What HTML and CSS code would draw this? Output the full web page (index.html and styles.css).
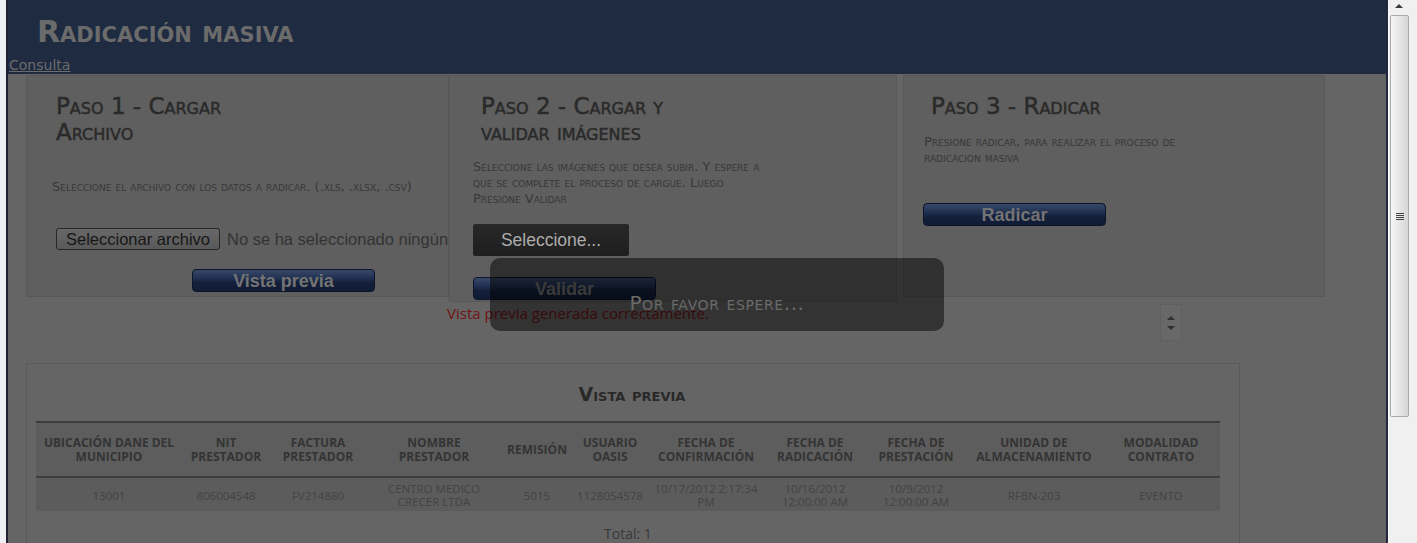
FILE: index.html
```html
<!DOCTYPE html>
<html lang="es">
<head>
<meta charset="utf-8">
<title>Radicación masiva</title>
<link rel="stylesheet" href="styles.css">
</head>
<body>
<div class="edge"></div>
<div class="frame">
  <header class="topbar">
    <h1 class="title">Radicación masiva</h1>
    <a class="nav-link" href="#">Consulta</a>
  </header>

  <section class="steps">
    <div class="step step-1">
      <h2 class="step-title">Paso 1 - Cargar Archivo</h2>
      <p class="step-desc">Seleccione el archivo con los datos a radicar. (.xls, .xlsx, .csv)</p>
      <div class="file-input">
        <span class="file-btn">Seleccionar archivo</span>
        <span class="file-name">No se ha seleccionado ningún archivo</span>
      </div>
      <button class="btn-navy btn-preview">Vista previa</button>
    </div>

    <div class="step step-2">
      <h2 class="step-title">Paso 2 - Cargar y validar imágenes</h2>
      <p class="step-desc">Seleccione las imágenes que desea subir. Y espere a<br>que se complete el proceso de cargue. Luego<br>Presione Validar</p>
      <button class="upload-btn">Seleccione...</button>
      <button class="btn-navy btn-validate">Validar</button>
    </div>

    <div class="step step-3">
      <h2 class="step-title">Paso 3 - Radicar</h2>
      <p class="step-desc">Presione radicar, para realizar el proceso de<br>radicacion masiva</p>
      <button class="btn-navy btn-submit">Radicar</button>
    </div>
  </section>

  <div class="status-row">
    <span class="status-msg">Vista previa generada correctamente.</span>
    <div class="spinner">
      <span class="spin-up"></span>
      <span class="spin-down"></span>
    </div>
  </div>

  <section class="preview">
    <h2 class="preview-title">Vista previa</h2>
    <table class="grid">
      <colgroup>
        <col class="c1"><col class="c2"><col class="c3"><col class="c4"><col class="c5"><col class="c6"><col class="c7"><col class="c8"><col class="c9"><col class="c10"><col class="c11">
      </colgroup>
      <thead>
        <tr>
          <th>Ubicación DANE del municipio</th>
          <th>NIT prestador</th>
          <th>Factura prestador</th>
          <th>Nombre<br>prestador</th>
          <th>Remisión</th>
          <th>Usuario Oasis</th>
          <th>Fecha de confirmación</th>
          <th>Fecha de radicación</th>
          <th>Fecha de prestación</th>
          <th>Unidad de almacenamiento</th>
          <th>Modalidad contrato</th>
        </tr>
      </thead>
      <tbody>
        <tr>
          <td>13001</td>
          <td>806004548</td>
          <td>FV214880</td>
          <td>CENTRO MEDICO CRECER LTDA</td>
          <td>5015</td>
          <td>1128054578</td>
          <td>10/17/2012 2:17:34 PM</td>
          <td>10/16/2012 12:00:00 AM</td>
          <td>10/9/2012 12:00:00 AM</td>
          <td>RFBN-203</td>
          <td>EVENTO</td>
        </tr>
      </tbody>
    </table>
    <p class="total">Total: 1</p>
  </section>

  <div class="modal">Por favor espere...</div>
</div>
<div class="scrollbar">
  <div class="sb-up"><span class="sb-arrow"></span></div>
  <div class="sb-thumb"><span class="sb-grip"></span></div>
</div>
</body>
</html>
```

FILE: styles.css
```css
/* The page is shown dimmed behind a "please wait" dialog
   (black overlay at 60%): the colours below are the dimmed ones. */

html, body {
  margin: 0;
  padding: 0;
}

body {
  width: 1417px;
  height: 543px;
  overflow: hidden;
  display: flex;
  background: #eef0f3;
  font-family: "DejaVu Sans", sans-serif;
}

.edge {
  width: 6px;
  flex: none;
  background: #eef0f3;
}

.frame {
  position: relative;
  flex: none;
  width: 1382px;
  box-sizing: border-box;
  border-left: 2px solid #1e2232;
  border-right: 2px solid #22283a;
  background: #656565;
  overflow: hidden;
}

/* header */
.topbar {
  height: 74px;
  box-sizing: border-box;
  background: #1f2b40;
  padding-top: 15px;
}

.title {
  margin: 0 0 0 29px;
  font-size: 30px;
  line-height: 34px;
  font-weight: bold;
  font-variant: small-caps;
  color: #6b6b6b;
}

.nav-link {
  display: block;
  width: max-content;
  margin: 8px 0 0 1px;
  font-size: 14px;
  line-height: 16px;
  color: #6c6c6c;
  text-decoration: underline;
}

/* steps */
.steps {
  display: flex;
  align-items: flex-start;
  margin-top: 1px;
  padding-left: 18px;
}

.step {
  box-sizing: border-box;
  min-height: 222px;
  background: #5f5f5f;
  border: 1px solid #585858;
  padding-top: 17px;
  padding-bottom: 1px;
}

.step-1 {
  width: 423px;
  padding-left: 25px;
}

.step-2 {
  width: 448px;
  padding-left: 23px;
}

.step-3 {
  width: 422px;
  margin-left: 6px;
  padding-left: 20px;
}

.step-title {
  margin: 0;
  width: 215px;
  font-size: 23px;
  line-height: 26px;
  font-weight: normal;
  font-variant: small-caps;
  color: #2a2a2a;
  -webkit-text-stroke: 0.5px #2a2a2a;
}

.step-1 .step-title { padding-left: 4px; }
.step-2 .step-title { padding-left: 8px; }
.step-3 .step-title { padding-left: 7px; }

.step-desc {
  margin: 0;
  font-size: 13px;
  line-height: 16px;
  font-variant: small-caps;
  color: #383838;
  white-space: nowrap;
}

.step-1 .step-desc { margin-top: 34px; }
.step-2 .step-desc { margin-top: 14px; }
.step-3 .step-desc { margin-top: 15px; }

.file-input {
  display: flex;
  align-items: center;
  gap: 7px;
  margin: 33px 0 0 4px;
  height: 22px;
  white-space: nowrap;
  font-family: "Liberation Sans", Arial, sans-serif;
  font-size: 16.5px;
}

.file-btn {
  box-sizing: border-box;
  height: 22px;
  line-height: 20px;
  padding: 0 9px;
  border: 1px solid #272727;
  border-radius: 3px;
  background: linear-gradient(#686868, #595959);
  color: #171717;
}

.file-name {
  color: #333333;
}

.btn-navy {
  display: block;
  box-sizing: border-box;
  width: 183px;
  height: 23px;
  padding: 0;
  border: 1px solid #0c1429;
  border-radius: 4px;
  background: linear-gradient(#394867 0%, #203051 40%, #141f3a 60%, #101c35 100%);
  color: #737373;
  font-family: "Liberation Sans", Arial, sans-serif;
  font-size: 18px;
  font-weight: bold;
  line-height: 20px;
  text-align: center;
}

.btn-preview {
  margin: 19px 0 0 140px;
}

/* upload widget drawn above the dimming layer */
.upload-btn {
  display: block;
  width: 156px;
  height: 32px;
  margin-top: 17px;
  padding: 0;
  border: none;
  border-radius: 2px;
  background: linear-gradient(#282828, #1e1e1e);
  color: #acacac;
  font-family: "Liberation Sans", Arial, sans-serif;
  font-size: 17.5px;
  text-align: center;
}

.btn-validate {
  margin-top: 21px;
}

.btn-submit {
  margin: 37px 0 0 -1px;
}

/* status */
.status-row {
  display: flex;
  justify-content: space-between;
  align-items: flex-start;
  padding: 0 204px 0 439px;
  height: 39px;
}

.status-msg {
  margin-top: 1px;
  font-family: "Open Sans", sans-serif;
  font-size: 15px;
  line-height: 20px;
  color: #701414;
}

.spinner {
  box-sizing: border-box;
  width: 22px;
  height: 37px;
  margin-top: 2px;
  background: #686868;
  border: 1px solid #606060;
  display: flex;
  flex-direction: column;
  align-items: center;
  justify-content: space-between;
  padding: 11px 0 10px;
}

.spin-up {
  border-left: 4px solid transparent;
  border-right: 4px solid transparent;
  border-bottom: 4px solid #2f2f2f;
}

.spin-down {
  border-left: 4px solid transparent;
  border-right: 4px solid transparent;
  border-top: 4px solid #2f2f2f;
}

/* preview */
.preview {
  margin: 22px 0 0 18px;
  width: 1214px;
  box-sizing: border-box;
  border: 1px solid #5a5a5a;
  padding: 18px 19px 0 9px;
  height: 200px;
}

.preview-title {
  margin: 0;
  text-align: center;
  font-size: 19px;
  line-height: 24px;
  font-weight: bold;
  font-variant: small-caps;
  color: #292929;
  padding-left: 8px;
}

.grid {
  margin-top: 15px;
  width: 1184px;
  table-layout: fixed;
  border-collapse: collapse;
  font-family: "Open Sans", sans-serif;
}

.c1 { width: 146px; }
.c2 { width: 88px; }
.c3 { width: 96px; }
.c4 { width: 136px; }
.c5 { width: 70px; }
.c6 { width: 76px; }
.c7 { width: 116px; }
.c8 { width: 102px; }
.c9 { width: 100px; }
.c10 { width: 136px; }
.c11 { width: 118px; }

.grid th {
  background: #5d5d5d;
  border-top: 2px solid #3d3d3d;
  border-bottom: 2px solid #3d3d3d;
  padding: 13px 3px 12px;
  font-size: 12px;
  line-height: 14px;
  font-weight: bold;
  text-transform: uppercase;
  color: #343434;
  text-align: center;
}

.grid td {
  background: #5c5c5c;
  padding: 4px 3px 3px;
  font-size: 11.5px;
  line-height: 13px;
  color: #434343;
  text-align: center;
}

.total {
  margin: 14px 0 0;
  text-align: center;
  font-family: "Open Sans", sans-serif;
  font-size: 14px;
  line-height: 18px;
  color: #383838;
}

/* "please wait" dialog over the dimmed page */
.modal {
  position: absolute;
  left: 482px;
  top: 258px;
  z-index: 3;
  width: 454px;
  height: 73px;
  box-sizing: border-box;
  padding-top: 34px;
  border-radius: 10px;
  background: rgba(0, 0, 0, 0.49);
  text-align: center;
  font-size: 20px;
  line-height: 22px;
  letter-spacing: 0.6px;
  font-variant: small-caps;
  color: #6a6a6a;
}

/* scrollbar */
.scrollbar {
  flex: none;
  width: 28px;
  border-left: 1px solid #fbfbfb;
  background: #f0f0f0;
}

.sb-up {
  height: 15px;
  display: flex;
  justify-content: center;
  align-items: flex-start;
  padding-right: 8px;
  box-sizing: border-box;
}

.sb-arrow {
  margin-top: 4px;
  border-left: 4px solid transparent;
  border-right: 4px solid transparent;
  border-bottom: 4px solid #3a3a3a;
}

.sb-thumb {
  box-sizing: border-box;
  margin-left: 1px;
  width: 19px;
  height: 402px;
  border: 1px solid #a9a9a9;
  border-radius: 2px;
  background: linear-gradient(to right, #f6f6f6, #e6e6e6 50%, #d6d6d6);
  display: flex;
  justify-content: center;
  align-items: center;
}

.sb-grip {
  width: 8px;
  height: 7px;
  background: repeating-linear-gradient(#444 0 1px, transparent 1px 2px);
}
```
